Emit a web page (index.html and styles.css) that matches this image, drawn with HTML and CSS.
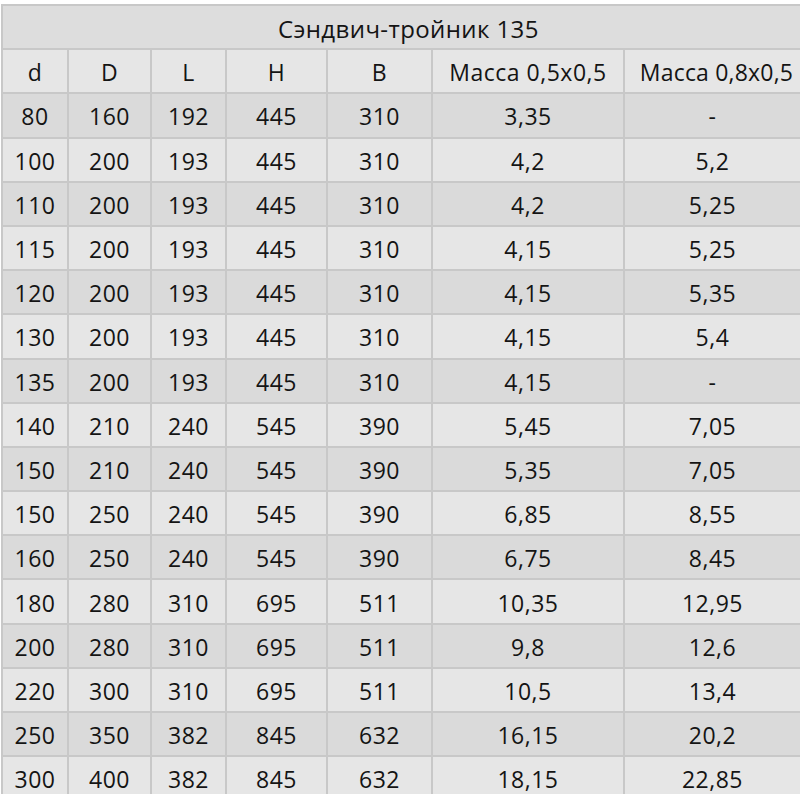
FILE: index.html
```html
<!DOCTYPE html>
<html lang="ru">
<head>
<meta charset="utf-8">
<title>Сэндвич-тройник 135</title>
<link rel="stylesheet" href="styles.css">
</head>
<body>
<div class="frame">
  <div class="grid">
    <div class="cell title">Сэндвич-тройник 135</div>
    <div class="cell head">d</div><div class="cell head">D</div><div class="cell head">L</div><div class="cell head">H</div><div class="cell head">B</div><div class="cell head">Масса 0,5x0,5</div><div class="cell head last">Масса 0,8x0,5</div>
    <div class="cell dark">80</div><div class="cell dark">160</div><div class="cell dark">192</div><div class="cell dark">445</div><div class="cell dark">310</div><div class="cell dark">3,35</div><div class="cell dark">-</div>
    <div class="cell">100</div><div class="cell">200</div><div class="cell">193</div><div class="cell">445</div><div class="cell">310</div><div class="cell">4,2</div><div class="cell">5,2</div>
    <div class="cell dark">110</div><div class="cell dark">200</div><div class="cell dark">193</div><div class="cell dark">445</div><div class="cell dark">310</div><div class="cell dark">4,2</div><div class="cell dark">5,25</div>
    <div class="cell">115</div><div class="cell">200</div><div class="cell">193</div><div class="cell">445</div><div class="cell">310</div><div class="cell">4,15</div><div class="cell">5,25</div>
    <div class="cell dark">120</div><div class="cell dark">200</div><div class="cell dark">193</div><div class="cell dark">445</div><div class="cell dark">310</div><div class="cell dark">4,15</div><div class="cell dark">5,35</div>
    <div class="cell">130</div><div class="cell">200</div><div class="cell">193</div><div class="cell">445</div><div class="cell">310</div><div class="cell">4,15</div><div class="cell">5,4</div>
    <div class="cell dark">135</div><div class="cell dark">200</div><div class="cell dark">193</div><div class="cell dark">445</div><div class="cell dark">310</div><div class="cell dark">4,15</div><div class="cell dark">-</div>
    <div class="cell">140</div><div class="cell">210</div><div class="cell">240</div><div class="cell">545</div><div class="cell">390</div><div class="cell">5,45</div><div class="cell">7,05</div>
    <div class="cell dark">150</div><div class="cell dark">210</div><div class="cell dark">240</div><div class="cell dark">545</div><div class="cell dark">390</div><div class="cell dark">5,35</div><div class="cell dark">7,05</div>
    <div class="cell">150</div><div class="cell">250</div><div class="cell">240</div><div class="cell">545</div><div class="cell">390</div><div class="cell">6,85</div><div class="cell">8,55</div>
    <div class="cell dark">160</div><div class="cell dark">250</div><div class="cell dark">240</div><div class="cell dark">545</div><div class="cell dark">390</div><div class="cell dark">6,75</div><div class="cell dark">8,45</div>
    <div class="cell">180</div><div class="cell">280</div><div class="cell">310</div><div class="cell">695</div><div class="cell">511</div><div class="cell">10,35</div><div class="cell">12,95</div>
    <div class="cell dark">200</div><div class="cell dark">280</div><div class="cell dark">310</div><div class="cell dark">695</div><div class="cell dark">511</div><div class="cell dark">9,8</div><div class="cell dark">12,6</div>
    <div class="cell">220</div><div class="cell">300</div><div class="cell">310</div><div class="cell">695</div><div class="cell">511</div><div class="cell">10,5</div><div class="cell">13,4</div>
    <div class="cell dark">250</div><div class="cell dark">350</div><div class="cell dark">382</div><div class="cell dark">845</div><div class="cell dark">632</div><div class="cell dark">16,15</div><div class="cell dark">20,2</div>
    <div class="cell">300</div><div class="cell">400</div><div class="cell">382</div><div class="cell">845</div><div class="cell">632</div><div class="cell">18,15</div><div class="cell">22,85</div>
  </div>
</div>
</body>
</html>
```

FILE: styles.css
```css
html, body {
  margin: 0;
  padding: 0;
  background: #ffffff;
}

.frame {
  width: 800px;
  height: 794px;
  overflow: hidden;
  padding-top: 4px;
  padding-left: 1px;
  box-sizing: border-box;
}

.grid {
  display: grid;
  grid-template-columns: 64px 81px 73px 99px 103px 190px 175px;
  grid-auto-rows: 42.2px;
  gap: 2px;
  padding: 2px;
  width: max-content;
  background: #c8c8c8;
  font-family: "Open Sans", "Noto Sans", sans-serif;
  font-size: 23px;
  letter-spacing: 0.5px;
  color: #141414;
}

.cell {
  display: flex;
  align-items: center;
  justify-content: center;
  background: #e6e6e6;
  white-space: nowrap;
  padding-top: 2px;
  box-sizing: border-box;
}

.title {
  grid-column: 1 / -1;
  background: #dddddd;
  justify-content: flex-start;
  padding-left: 275px;
  font-size: 24px;
  letter-spacing: 0.4px;
}

.head {
  background: #e6e6e6;
}

.last {
  padding-left: 8px;
  letter-spacing: 0.2px;
}

.dark {
  background: #dadada;
}
```
